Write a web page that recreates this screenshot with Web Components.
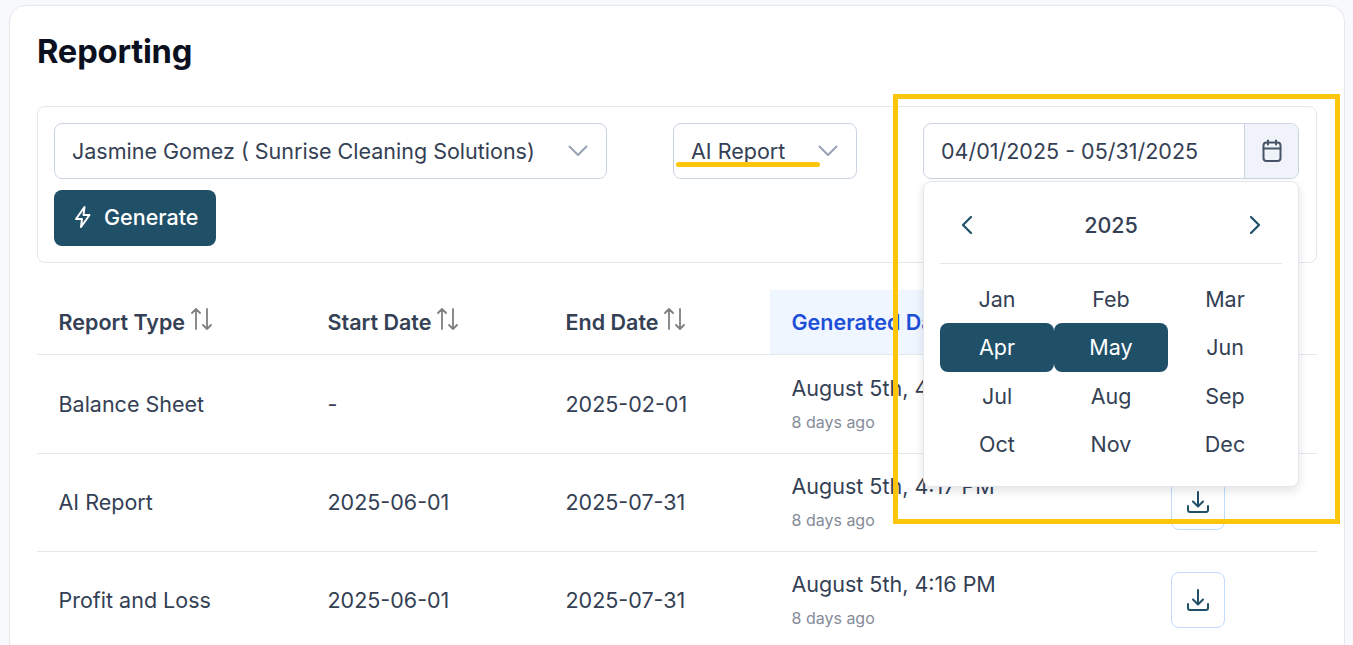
<!DOCTYPE html>
<html lang="en">
<head>
<meta charset="utf-8">
<title>Reporting</title>
<style>
  html, body { margin: 0; height: 645px; overflow: hidden; }
  body {
    position: relative;
    background: #f8f9fc;
    font-family: Inter, "Liberation Sans", sans-serif;
    color: #344054;
  }
</style>
</head>
<body>
<reporting-card>
  <span slot="title">Reporting</span>
  <report-filters slot="filters"></report-filters>
  <report-table slot="table">
    <report-row type="Balance Sheet" start="-" end="2025-02-01" generated="August 5th, 4:18 PM" ago="8 days ago"></report-row>
    <report-row type="AI Report" start="2025-06-01" end="2025-07-31" generated="August 5th, 4:17 PM" ago="8 days ago"></report-row>
    <report-row type="Profit and Loss" start="2025-06-01" end="2025-07-31" generated="August 5th, 4:16 PM" ago="8 days ago"></report-row>
  </report-table>
</reporting-card>
<annotation-marks></annotation-marks>

<script>
const chevronDown = `<svg width="22" height="22" viewBox="0 0 22 22" fill="none" stroke="#98a2b3" stroke-width="2" stroke-linecap="round" stroke-linejoin="round"><path d="M2.5 6.5l8.5 8.5 8.5-8.5"/></svg>`;

class ReportingCard extends HTMLElement {
  constructor() {
    super();
    this.attachShadow({ mode: "open" });
    this.shadowRoot.innerHTML = `
      <style>
        :host {
          display: block;
          margin: 5px 8px 0 9px;
          height: 700px;
          box-sizing: border-box;
          padding: 27px 27px 0;
          background: #fff;
          border: 1px solid #e4e7ec;
          border-radius: 16px;
        }
        h1 {
          margin: 0 0 37px;
          font-size: 32.7px;
          line-height: 36px;
          font-weight: 700;
          letter-spacing: -0.2px;
          color: #0b1020;
        }
      </style>
      <h1><slot name="title"></slot></h1>
      <slot name="filters"></slot>
      <slot name="table"></slot>
    `;
  }
}

class SelectBox extends HTMLElement {
  constructor() {
    super();
    this.attachShadow({ mode: "open" });
    this.shadowRoot.innerHTML = `
      <style>
        :host {
          display: flex;
          align-items: center;
          justify-content: space-between;
          box-sizing: border-box;
          height: 56px;
          padding: 0 17px;
          border: 1px solid #cbd5e1;
          border-radius: 8px;
          background: #fff;
          font-size: 21.5px;
          color: #344054;
          white-space: nowrap;
        }
        svg { display: block; }
      </style>
      <slot></slot>
      ${chevronDown}
    `;
  }
}

class DateRange extends HTMLElement {
  constructor() {
    super();
    this.attachShadow({ mode: "open" });
    this.shadowRoot.innerHTML = `
      <style>
        :host {
          display: block;
          position: relative;
          width: 376px;
        }
        .field {
          display: flex;
          box-sizing: border-box;
          height: 56px;
          border: 1px solid #cbd5e1;
          border-radius: 8px;
          overflow: hidden;
          background: #fff;
        }
        .value {
          flex: 1;
          display: flex;
          align-items: center;
          padding-left: 17px;
          font-size: 21.5px;
          color: #344054;
          white-space: nowrap;
        }
        .addon {
          width: 53px;
          display: flex;
          align-items: center;
          justify-content: center;
          background: #f0f3f9;
          border-left: 1px solid #cbd5e1;
        }
        month-picker {
          position: absolute;
          top: 58px;
          left: 0;
          right: 0;
          z-index: 5;
        }
      </style>
      <div class="field">
        <div class="value"><slot></slot></div>
        <div class="addon">
          <svg width="24" height="24" viewBox="0 0 24 24" fill="none" stroke="#475467" stroke-width="2" stroke-linecap="round" stroke-linejoin="round">
            <rect x="3.5" y="3.5" width="17" height="18.5" rx="3"/>
            <path d="M8 1.5v4M16 1.5v4M3.5 9.5h17"/>
          </svg>
        </div>
      </div>
      <month-picker year="2025"></month-picker>
    `;
  }
}

class MonthPicker extends HTMLElement {
  constructor() {
    super();
    this.attachShadow({ mode: "open" });
    const months = ["Jan", "Feb", "Mar", "Apr", "May", "Jun", "Jul", "Aug", "Sep", "Oct", "Nov", "Dec"];
    const selected = ["Apr", "May"];
    this.shadowRoot.innerHTML = `
      <style>
        :host {
          display: block;
          box-sizing: border-box;
          height: 306px;
          padding: 0 16px;
          background: #fff;
          border: 1px solid #e4e7ec;
          border-radius: 8px;
          box-shadow: 0 4px 10px rgba(16, 24, 40, 0.12);
        }
        header {
          display: flex;
          align-items: center;
          justify-content: space-between;
          box-sizing: border-box;
          height: 82px;
          padding: 4px 15px 0;
          border-bottom: 1px solid #e4e7ec;
          font-size: 21.5px;
          font-weight: 500;
          color: #344054;
        }
        .months {
          display: grid;
          grid-template-columns: repeat(3, 1fr);
          grid-auto-rows: 48.5px;
          margin-top: 10.5px;
        }
        .month {
          display: flex;
          align-items: center;
          justify-content: center;
          font-size: 21.5px;
          color: #344054;
          border-radius: 8px;
        }
        .month.on { background: #1f5068; color: #fff; }
        svg { display: block; }
      </style>
      <header>
        <svg width="24" height="24" viewBox="0 0 24 24" fill="none" stroke="#1f5068" stroke-width="2.2" stroke-linecap="round" stroke-linejoin="round"><path d="M16 4l-8 8 8 8"/></svg>
        <span>${this.getAttribute("year")}</span>
        <svg width="24" height="24" viewBox="0 0 24 24" fill="none" stroke="#1f5068" stroke-width="2.2" stroke-linecap="round" stroke-linejoin="round"><path d="M8 4l8 8-8 8"/></svg>
      </header>
      <div class="months">
        ${months.map((m) => `<div class="month${selected.includes(m) ? " on" : ""}">${m}</div>`).join("")}
      </div>
    `;
  }
}

class ReportFilters extends HTMLElement {
  constructor() {
    super();
    this.attachShadow({ mode: "open" });
    this.shadowRoot.innerHTML = `
      <style>
        :host {
          display: block;
          box-sizing: border-box;
          height: 157px;
          padding: 16px 17px 16px 16px;
          border: 1px solid #e4e7ec;
          border-radius: 8px;
        }
        .row {
          display: flex;
          justify-content: space-between;
        }
        .who { width: 553px; }
        .kind { width: 184px; }
        button {
          display: flex;
          align-items: center;
          gap: 11px;
          box-sizing: border-box;
          width: 162px;
          height: 56px;
          margin-top: 11px;
          padding: 0 0 2px 19px;
          border: 0;
          border-radius: 8px;
          background: #1f5068;
          color: #fff;
          font: 500 21.5px Inter, "Liberation Sans", sans-serif;
        }
        svg { display: block; }
      </style>
      <div class="row">
        <select-box class="who">Jasmine Gomez ( Sunrise Cleaning Solutions)</select-box>
        <select-box class="kind">AI Report</select-box>
        <date-range>04/01/2025 - 05/31/2025</date-range>
      </div>
      <button>
        <svg width="20" height="24" viewBox="0 0 20 24" fill="none" stroke="#fff" stroke-width="2" stroke-linejoin="round" stroke-linecap="round"><path d="M11.5 2L3 14h6l-1 8 8.5-12h-6z"/></svg>
        Generate
      </button>
    `;
  }
}

const sortIcon = `<svg width="22" height="22" viewBox="0 0 22 22" fill="none" stroke="#808080" stroke-width="1.8" stroke-linecap="round" stroke-linejoin="round"><path d="M5 21V1M1 5l4-4 4 4M16 1v20M12 17l4 4 4-4"/></svg>`;

class ReportTable extends HTMLElement {
  constructor() {
    super();
    this.attachShadow({ mode: "open" });
    const heads = ["Report Type", "Start Date", "End Date", "Generated Date"];
    this.shadowRoot.innerHTML = `
      <style>
        :host {
          display: block;
          margin-top: 27px;
          --report-cols: 269px 238px 226px 379px 169px;
        }
        .head {
          display: grid;
          grid-template-columns: var(--report-cols);
          height: 65px;
          margin-bottom: 0.5px;
          border-bottom: 1px solid #e4e7ec;
          box-sizing: border-box;
        }
        .cell {
          display: flex;
          align-items: center;
          gap: 6px;
          padding: 0 0 0 21.5px;
          font-size: 21.5px;
          font-weight: 600;
          color: #344054;
          white-space: nowrap;
        }
        .cell.sorted { background: #eff6ff; color: #1d4ed8; }
        svg { display: block; margin-bottom: 7px; }
      </style>
      <div class="head">
        ${heads.map((h, i) => `<div class="cell${i === 3 ? " sorted" : ""}">${h}${sortIcon}</div>`).join("")}
      </div>
      <slot></slot>
    `;
  }
}

class ReportRow extends HTMLElement {
  constructor() {
    super();
    this.attachShadow({ mode: "open" });
    const attr = (n) => this.getAttribute(n);
    this.shadowRoot.innerHTML = `
      <style>
        :host {
          display: grid;
          grid-template-columns: var(--report-cols);
          align-items: center;
          box-sizing: border-box;
          height: 98px;
          border-bottom: 1px solid #e4e7ec;
          font-size: 21.5px;
          color: #344054;
        }
        .cell { padding-left: 21.5px; white-space: nowrap; }
        .stack { padding-bottom: 1px; }
        .ago { margin-top: 12px; font-size: 16px; color: #858b98; }
        .when { line-height: 24px; }
        .action { padding-left: 22px; }
        button {
          display: flex;
          align-items: center;
          justify-content: center;
          width: 54px;
          height: 56px;
          padding: 0;
          background: #fff;
          border: 1px solid #bfdbfe;
          border-radius: 8px;
        }
        svg { display: block; }
      </style>
      <div class="cell">${attr("type")}</div>
      <div class="cell">${attr("start")}</div>
      <div class="cell">${attr("end")}</div>
      <div class="cell stack">
        <div class="when">${attr("generated")}</div>
        <div class="ago">${attr("ago")}</div>
      </div>
      <div class="cell action">
        <button aria-label="Download">
          <svg width="24" height="24" viewBox="0 0 24 24" fill="none" stroke="#1f5068" stroke-width="2" stroke-linecap="round" stroke-linejoin="round"><path d="M12 2v14M7 11.5l5 5 5-5M2 16v4a2 2 0 0 0 2 2h16a2 2 0 0 0 2-2v-4"/></svg>
        </button>
      </div>
    `;
  }
}

// reviewer marks drawn over the screenshot, not part of the page layout
class AnnotationMarks extends HTMLElement {
  constructor() {
    super();
    this.attachShadow({ mode: "open" });
    this.shadowRoot.innerHTML = `
      <style>
        :host { display: contents; }
        .box {
          position: absolute;
          left: 893px;
          top: 94px;
          width: 447px;
          height: 430px;
          box-sizing: border-box;
          border: 5px solid #fec60a;
          z-index: 10;
          pointer-events: none;
        }
        .line {
          position: absolute;
          left: 676px;
          top: 162px;
          width: 144px;
          height: 5px;
          border-radius: 3px;
          background: #fec60a;
          z-index: 10;
        }
      </style>
      <div class="box"></div>
      <div class="line"></div>
    `;
  }
}

customElements.define("select-box", SelectBox);
customElements.define("month-picker", MonthPicker);
customElements.define("date-range", DateRange);
customElements.define("report-filters", ReportFilters);
customElements.define("report-table", ReportTable);
customElements.define("report-row", ReportRow);
customElements.define("reporting-card", ReportingCard);
customElements.define("annotation-marks", AnnotationMarks);
</script>
</body>
</html>
